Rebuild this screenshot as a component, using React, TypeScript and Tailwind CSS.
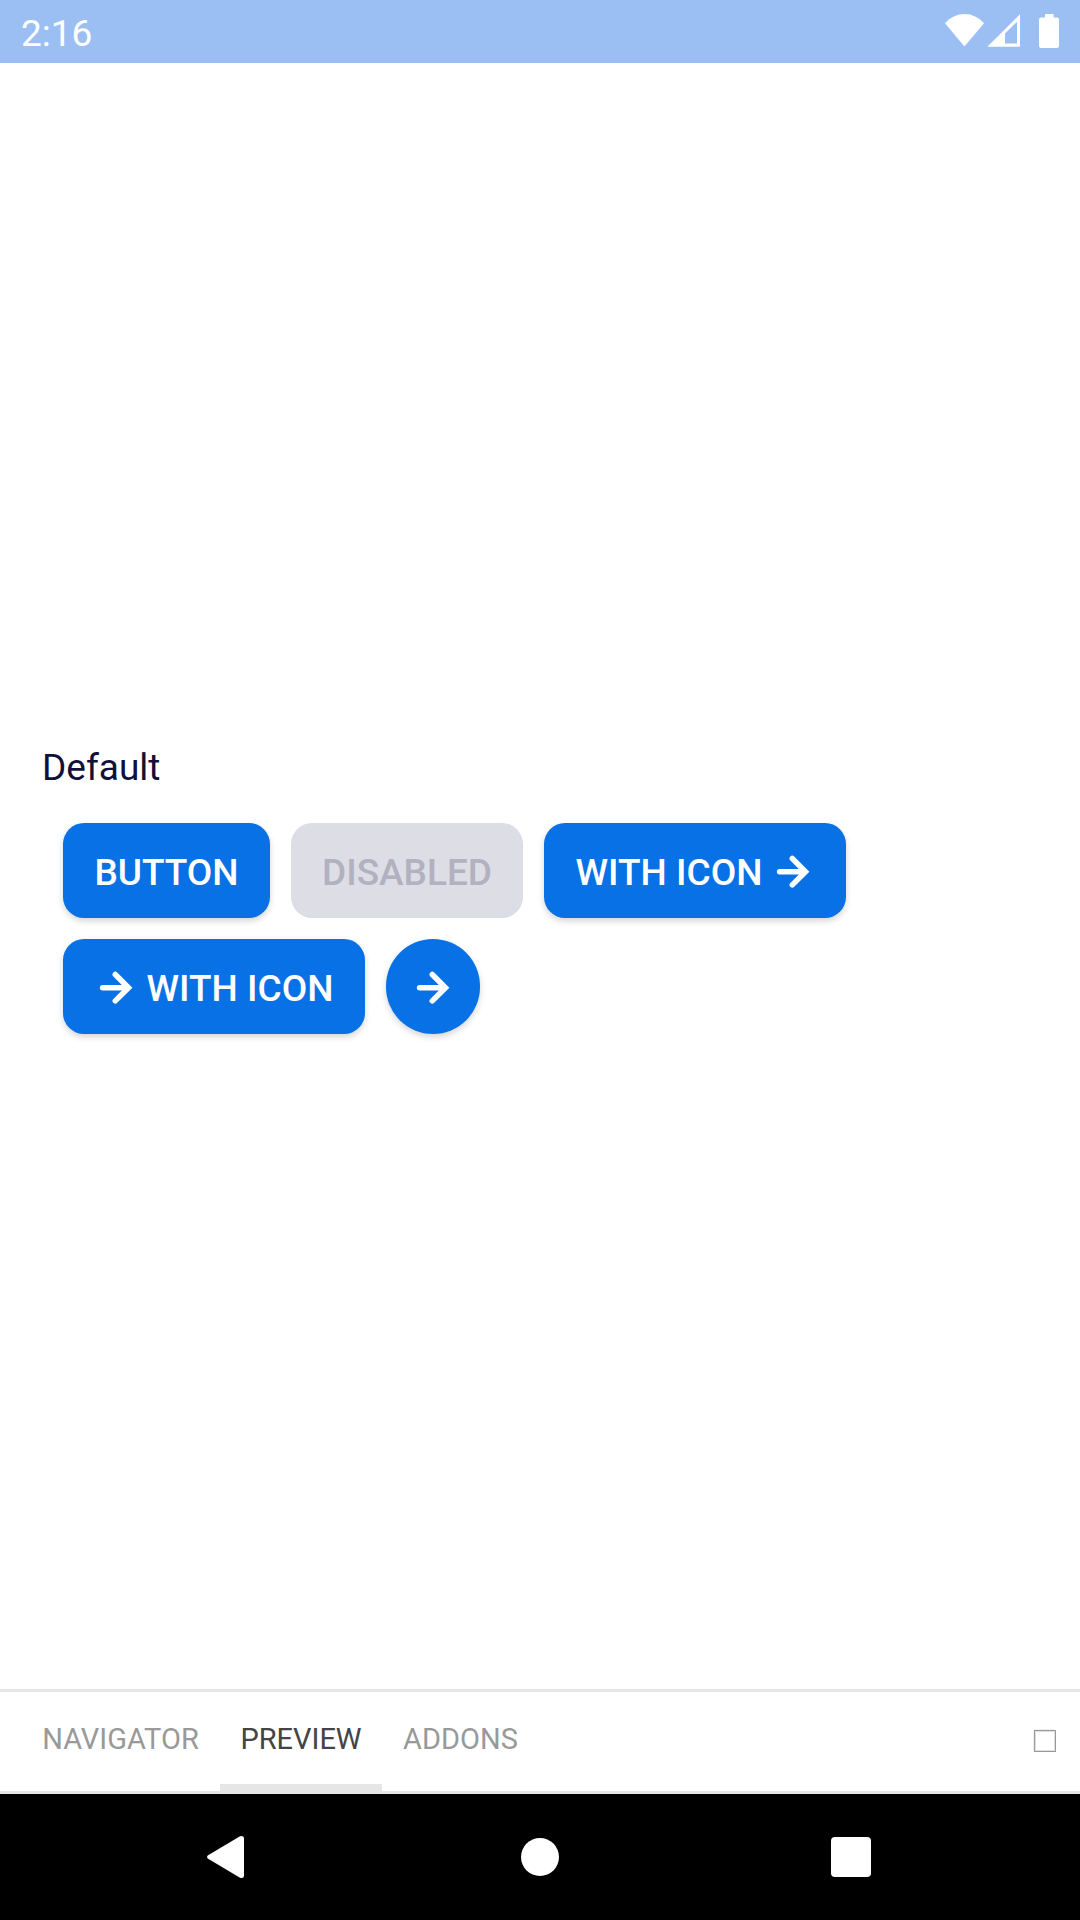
import type { ReactNode } from "react";

function StatusBar() {
  return (
    <header className="flex h-[63px] shrink-0 items-start justify-between bg-[#9cbff3] text-white">
      <span className="ml-[21px] mt-[12px] text-[37px] leading-[43px]">2:16</span>
      <div className="flex h-[63px] w-[140px]">
        <svg width="140" height="63" viewBox="940 0 140 63" fill="currentColor" aria-hidden="true">
          <path d="M964.4 46.6 945 23.2C950.2 17.4 957 14 964.4 14s14.400 3.400 19.600 9.200Z" />
          <path fillRule="evenodd" d="M987.300 46.800 1020 14.200V46.800ZM1005 33.500V43.600H1017V21.800Z" />
          <path d="M1045 14h8.600v3.500h3.400q2 0 2 2V46q0 2-2 2h-16q-2 0-2-2V19.500q0-2 2-2h4Z" />
        </svg>
      </div>
    </header>
  );
}

function ArrowRight() {
  return (
    <svg width="42" height="42" viewBox="0 0 42 42" fill="none" stroke="currentColor" strokeWidth="5.5" strokeLinecap="round" className="shrink-0" aria-hidden="true">
      <path d="M7.600 21.700H32.600" />
      <path d="M20.300 8.500 33.500 21.700 20.300 34.900" />
    </svg>
  );
}

function Button({ children, className }: { children: ReactNode; className: string }) {
  return (
    <button
      className={
        "flex h-[95px] items-center justify-center gap-[10px] text-[37px] font-medium leading-[43px] " + className
      }
    >
      {children}
    </button>
  );
}

const PRIMARY = "rounded-[21px] bg-[#0871e5] text-white shadow-[0_3px_6px_rgba(0,0,0,0.17)]";

function Label({ children }: { children: ReactNode }) {
  return <span className="whitespace-nowrap pt-[4px]">{children}</span>;
}

function Tab({ label, width, active }: { label: string; width: string; active?: boolean }) {
  return (
    <button
      className={
        "flex flex-col items-center justify-between pt-[30px] text-[29px] leading-[34px] " +
        width +
        (active ? " text-[#444444]" : " text-[#999999]")
      }
    >
      {label}
      <span className={"h-[7px] w-full" + (active ? " bg-[#e6e6e6]" : "")} />
    </button>
  );
}

export default function App() {
  return (
    <div className="flex h-[1920px] w-[1080px] flex-col overflow-hidden bg-white font-['Roboto',sans-serif]">
      <StatusBar />
      <main className="flex-1 px-[42px] pt-[683px]">
        <h1 className="text-[37px] font-normal leading-[43px] text-[#10103a]">Default</h1>
        <div className="mt-[34px] flex flex-col gap-[21px] pl-[21px]">
          <div className="flex gap-[21px]">
            <Button className={PRIMARY + " w-[207px]"}><Label>BUTTON</Label></Button>
            <Button className="w-[232px] rounded-[21px] bg-[#dddde6] text-[#b1b1bf]"><Label>DISABLED</Label></Button>
            <Button className={PRIMARY + " w-[302px]"}><Label>WITH ICON</Label><ArrowRight /></Button>
          </div>
          <div className="flex gap-[21px]">
            <Button className={PRIMARY + " w-[302px]"}><ArrowRight /><Label>WITH ICON</Label></Button>
            <Button className="w-[94px] rounded-full bg-[#0871e5] text-white shadow-[0_3px_6px_rgba(0,0,0,0.17)]"><ArrowRight /></Button>
          </div>
        </div>
      </main>
      <div className="flex h-[105px] shrink-0 justify-between border-y-[3px] border-[#e6e6e6] pl-[21px] pr-[24px]">
        <div className="flex">
          <Tab label="NAVIGATOR" width="w-[199px]" />
          <Tab label="PREVIEW" width="w-[162px]" active />
          <Tab label="ADDONS" width="w-[157px]" />
        </div>
        <button className="mt-[38px] h-[22px] w-[22px] border border-[#999999] shadow-[inset_0_0_0_1px_#e0e0e0,-1px_-1px_0_#f1f1f1]" aria-label="Toggle" />
      </div>
      <nav className="flex h-[126px] shrink-0 items-center justify-between bg-black pl-[206px] pr-[209px] text-white">
        <svg width="38" height="44" viewBox="0 0 38 44" fill="currentColor" aria-hidden="true">
          <path d="M1.700 20.500 34 1.300Q38 0 38 3.500V40.500Q38 44 34 42.700L1.700 23.500Q.2 22 1.700 20.500Z" />
        </svg>
        <span className="ml-[4px] h-[38px] w-[38px] rounded-full bg-white" />
        <span className="h-[40px] w-[40px] rounded-[4px] bg-white" />
      </nav>
    </div>
  );
}
